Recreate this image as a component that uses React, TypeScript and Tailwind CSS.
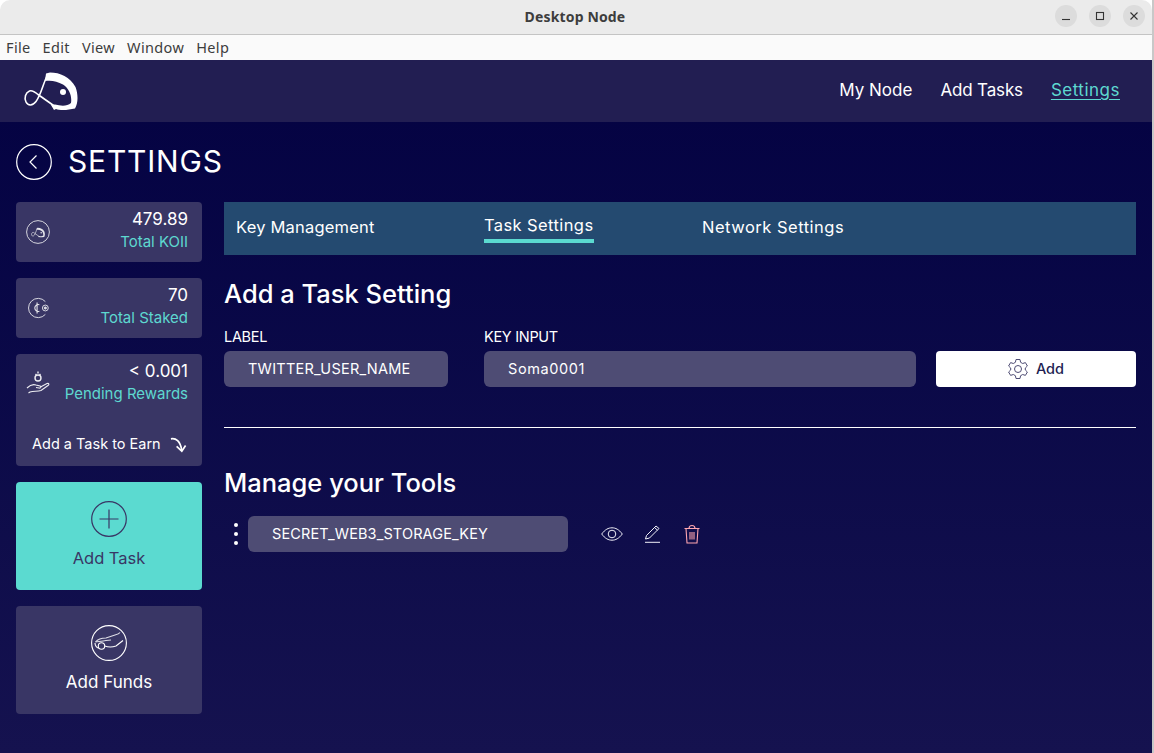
import React from "react";

const F = { fontFamily: '"Inter", "Noto Sans", sans-serif' };

function FishMark({ className = "", stroke = 1.6, bg = "white" }: { className?: string; stroke?: number; bg?: string }) {
  return (
    <svg viewBox="23 71 55 40" className={className} fill="none">
      <path d="M45 81 L46 73.500 L50 72.500 C60 72.500 70 77 75.500 87 C78.500 95 78 104 75 108.500 L66 110 C62 110.300 58 110 56 109 L54 110 L51 105 L55 104.500 C61 106 67 106.500 71 103 C72 97 70 89 63 84.500 C57 81 51 80 45 81 Z" fill={bg} />
      <path d="M47 76 C43 84 41 95 36 101.500 C32.500 106 28 106 26 102 C24 98 25.500 92.500 29.500 91 C32.500 90 35 92 38 94.500 L55 106.500" stroke={bg} strokeWidth={stroke} strokeLinecap="round" />
      <circle cx="63" cy="92" r="3" fill={bg} />
    </svg>
  );
}

function KoiiCircle() {
  return (
    <div className="relative w-6 h-6 flex items-center justify-center">
      <svg viewBox="0 0 24 24" className="absolute inset-0 w-6 h-6" fill="none" stroke="#e5e5ea" strokeWidth="0.9">
        <circle cx="12" cy="12" r="11.400" />
      </svg>
      <FishMark className="relative w-[14px] h-[11px]" stroke={2.6} bg="#e5e5ea" />
    </div>
  );
}

function StakeCircle() {
  return (
    <svg viewBox="0 0 24 24" className="w-6 h-[22px]" fill="none" stroke="#e5e5ea" strokeWidth="1">
      <path d="M20 5 A10.500 10.500 0 1 0 20 19" />
      <circle cx="20" cy="12" r="3.200" />
      <circle cx="20" cy="12" r="1.200" fill="#e5e5ea" />
      <path d="M13.500 8.500 C11 7.500 8.500 9.500 8.500 12 C8.500 14.500 11 16.500 13.500 15.500 M11 6 V18" strokeWidth="1.200" />
    </svg>
  );
}

function HandCoin() {
  return (
    <svg viewBox="0 0 24 26" className="w-6 h-[26px]" fill="none" stroke="#eeeef2" strokeWidth="1.100">
      <circle cx="12" cy="9" r="3" strokeWidth="1.400" />
      <path d="M9.500 5 L10.500 6 M12 2.500 V4.500 M14.500 5 L13.500 6" strokeWidth="1.400" />
      <path d="M1 19 C4 16 7 15 10 16 L14 17 C15.500 17.500 15 19.500 13 19 L10 18.500 M14.500 18 L21 14.500 C23 14 23.500 15.500 22 16.500 L15 21.500 C11 23 8 21.500 4 23 L2.500 24" />
    </svg>
  );
}

function CurveArrow() {
  return (
    <svg viewBox="0 0 18 18" className="w-[17px] h-[17px]" fill="none" stroke="white" strokeWidth="1.800">
      <path d="M1 3 C6 2 11 5 12.500 15.500" />
      <path d="M7 11 L12.500 16 L16.500 10" />
    </svg>
  );
}

function HandFunds() {
  return (
    <svg viewBox="0 0 36 36" className="w-9 h-9" fill="none" stroke="white" strokeWidth="1.100">
      <circle cx="18" cy="18" r="17.400" />
      <path d="M4.500 17 C7 14 11 13 15 13 L24 10 C26 9.500 28 9 29 7.500" stroke="#e0e0e8" />
      <path d="M4 18 C4 21 6 23 8 23" />
      <path d="M4.500 17 C8 16.500 12 16 15 15.500 L20 15" stroke="#e0e0e8" />
      <circle cx="10.500" cy="21" r="3.200" />
      <path d="M13.700 21 C18 22.500 22 22 25 21 L32 15.500" />
    </svg>
  );
}

function Stat({ icon, value, label }: { icon: React.ReactNode; value: string; label: string }) {
  return (
    <div className="h-[60px] rounded-[4px] bg-[#393665] pl-[10px] pr-[14px] flex items-center justify-between">
      <div className="flex items-center">{icon}</div>
      <div className="self-start pt-[6px] text-right">
        <div className="text-[17px] leading-[22px] text-white">{value}</div>
        <div className="mt-[1px] text-[15px] leading-[22px] text-[#5ed8d0]">{label}</div>
      </div>
    </div>
  );
}

export default function App() {
  return (
    <div style={F} className="w-[1154px] h-[753px] overflow-hidden flex flex-col bg-white border-r-2 border-[#c8c8c8]">
      <div className="h-[35px] shrink-0 bg-[#ebebeb] border-b border-[#c4c4c4] rounded-t-[10px] relative flex items-center justify-center">
        <span className="pb-[2px] pr-[2px] text-[14px] font-bold tracking-[0.15px] text-[#3d3d3d]" style={{ fontFamily: '"Noto Sans", "Open Sans", sans-serif' }}>Desktop Node</span>
        <div className="absolute right-[7px] top-[5px] flex gap-[12px]">
          <div className="w-[22px] h-[22px] rounded-full bg-[#dcdcdc] flex items-center justify-center">
            <svg viewBox="0 0 12 12" className="w-3 h-3" stroke="#333" fill="none"><path d="M2 9.500 H10" strokeWidth="1.100" /></svg>
          </div>
          <div className="w-[22px] h-[22px] rounded-full bg-[#dcdcdc] flex items-center justify-center">
            <svg viewBox="0 0 12 12" className="w-3 h-3" stroke="#333" fill="none"><rect x="2.500" y="2.500" width="7" height="7" strokeWidth="1.100" /></svg>
          </div>
          <div className="w-[22px] h-[22px] rounded-full bg-[#dcdcdc] flex items-center justify-center">
            <svg viewBox="0 0 12 12" className="w-3 h-3" stroke="#333" fill="none"><path d="M2.500 2.500 L9.500 9.500 M9.500 2.500 L2.500 9.500" strokeWidth="1.100" /></svg>
          </div>
        </div>
      </div>
      <div className="h-[25px] shrink-0 bg-[#fafafa] flex items-center pl-[6px] gap-[12px] text-[14.500px] tracking-[0.35px] text-[#3d3d3d]" style={{ fontFamily: '"Noto Sans", sans-serif' }}>
        <span>File</span><span>Edit</span><span>View</span><span>Window</span><span>Help</span>
      </div>
      <div className="flex-1 min-h-0 flex flex-col bg-gradient-to-b from-[#040242] to-[#15124f]">
        <header className="h-[62px] shrink-0 bg-[#221e52] flex items-center justify-between pl-[23px] pr-[32px]">
          <FishMark className="w-[55px] h-[40px]" />
          <nav className="pb-[1px] flex items-center gap-[28px] text-[17px] text-white">
            <span>My Node</span>
            <span className="tracking-[-0.15px]">Add Tasks</span>
            <span className="tracking-[0.5px] underline underline-offset-[3px] text-[#5ed8d0]">Settings</span>
          </nav>
        </header>
        <div className="h-[80px] shrink-0 flex items-center pl-[16px] pb-[1px] gap-[16px]">
          <svg viewBox="0 0 36 36" className="w-9 h-9" fill="none" stroke="white">
            <circle cx="18" cy="18" r="17.300" strokeWidth="1.200" />
            <path d="M20.500 11.500 L14 18 L20.500 24.500" strokeWidth="1.200" />
          </svg>
          <h1 className="pb-[2px] text-[30px] leading-none text-white tracking-[0.8px]">SETTINGS</h1>
        </div>
        <div className="flex pl-[16px] pr-[16px] gap-[22px]">
          <aside className="w-[186px] shrink-0 flex flex-col gap-[16px]">
            <Stat icon={<KoiiCircle />} value="479.89" label="Total KOII" />
            <Stat icon={<StakeCircle />} value="70" label="Total Staked" />
            <div className="h-[112px] rounded-[4px] bg-[#393665] pl-[10px] pr-[14px] pt-[6px] flex flex-col">
              <div className="flex justify-between">
                <div className="pt-[9px]"><HandCoin /></div>
                <div className="text-right">
                  <div className="text-[17px] leading-[22px] text-white">&lt; 0.001</div>
                  <div className="text-[15px] leading-[22px] mt-[1px] text-[#5ed8d0] whitespace-nowrap">Pending Rewards</div>
                </div>
              </div>
              <div className="mt-[28px] pl-[6px] flex items-center gap-[9px] text-[14.500px] leading-[22px] text-white whitespace-nowrap">
                Add a Task to Earn <CurveArrow />
              </div>
            </div>
            <div className="h-[108px] rounded-[4px] bg-[#5bdad0] flex flex-col items-center pt-[19px] text-[#393665]">
              <svg viewBox="0 0 36 36" className="w-9 h-9" fill="none" stroke="#393665" strokeWidth="1.200">
                <circle cx="18" cy="18" r="17.300" />
                <path d="M18 8.500 V27.500 M8.500 18 H27.500" />
              </svg>
              <div className="mt-[9px] text-[16.500px] leading-[24px]">Add Task</div>
            </div>
            <div className="h-[108px] rounded-[4px] bg-[#393665] flex flex-col items-center pt-[19px] text-white">
              <HandFunds />
              <div className="mt-[9px] text-[17px] leading-[24px]">Add Funds</div>
            </div>
          </aside>
          <main className="flex-1 min-w-0">
            <div className="h-[53px] bg-[#244a70] flex text-white text-[16.500px]">
              <div className="w-[260px] pl-[12px] pt-[13px] leading-[24px] tracking-[0.2px]">Key Management</div>
              <div className="w-[218px]">
                <div className="inline-block pt-[11px] leading-[24px] tracking-[0.4px] border-b-[4px] border-[#5bdad0] pb-[2px]">Task Settings</div>
              </div>
              <div className="pt-[13px] leading-[24px] tracking-[0.5px]">Network Settings</div>
            </div>
            <h2 className="mt-[24px] text-[25.500px] leading-[30px] font-medium text-white">Add a Task Setting</h2>
            <div className="mt-[18px] flex items-end">
              <div className="w-[224px] mr-[36px]">
                <div className="text-[14.500px] leading-[20px] text-white tracking-[-0.3px]">LABEL</div>
                <div className="mt-[4px] h-[36px] rounded-[6px] bg-[#4e4c74] pl-[24px] flex items-center text-[14.500px] tracking-[0.25px] text-white">TWITTER_USER_NAME</div>
              </div>
              <div className="w-[432px] mr-[20px]">
                <div className="text-[14.500px] leading-[20px] text-white tracking-[-0.3px]">KEY INPUT</div>
                <div className="mt-[4px] h-[36px] rounded-[6px] bg-[#4e4c74] pl-[24px] flex items-center text-[14.500px] tracking-[0.6px] text-white">Soma0001</div>
              </div>
              <div className="w-[200px] h-[36px] rounded-[4px] bg-white flex items-center justify-center gap-[6px] pr-[2px] text-[14.500px] font-medium text-[#221e52]">
                <svg viewBox="0 0 24 24" className="w-[24px] h-[24px]" fill="none" stroke="#4e4c74" strokeWidth="1">
                  <circle cx="12" cy="12" r="3.500" />
                  <path d="M10 2.500 H14 L14.600 5.300 L16.700 6.500 L19.400 5.600 L21.400 9 L19.300 11 V13 L21.400 15 L19.400 18.400 L16.700 17.500 L14.600 18.700 L14 21.500 H10 L9.400 18.700 L7.300 17.500 L4.600 18.400 L2.600 15 L4.700 13 V11 L2.600 9 L4.600 5.600 L7.300 6.500 L9.400 5.300 Z" strokeLinejoin="round" />
                </svg>
                Add
              </div>
            </div>
            <div className="mt-[40px] h-px bg-white" />
            <h2 className="mt-[40px] text-[25.500px] leading-[30px] font-medium text-white">Manage your Tools</h2>
            <div className="mt-[18px] flex items-center">
              <div className="w-[24px] flex flex-col items-center gap-[5px]">
                <span className="w-[4px] h-[4px] rounded-full bg-white" />
                <span className="w-[4px] h-[4px] rounded-full bg-white" />
                <span className="w-[4px] h-[4px] rounded-full bg-white" />
              </div>
              <div className="w-[320px] h-[36px] rounded-[6px] bg-[#4e4c74] pl-[24px] flex items-center text-[14.500px] tracking-[0.13px] text-white">SECRET_WEB3_STORAGE_KEY</div>
              <div className="ml-[33px] flex items-center">
                <svg viewBox="0 0 22 14" className="w-[22px] h-[14px]" fill="none" stroke="#f0f0f8" strokeWidth="1">
                  <path d="M0.700 7 C4 2.500 7.500 0.800 11 0.800 C14.500 0.800 18 2.500 21.300 7 C18 11.500 14.500 13.200 11 13.200 C7.500 13.200 4 11.500 0.700 7 Z" />
                  <circle cx="11" cy="7" r="3.800" />
                </svg>
                <svg viewBox="0 0 16 18" className="ml-[21px] w-[17px] h-[18px]" fill="none" stroke="#f0f0f8" strokeWidth="1">
                  <path d="M1 14 L2 10.500 L11.500 1 L14.500 3.500 L5 13 Z M10 2.500 L13 5.200" />
                  <path d="M0.500 17.300 H15.500" />
                </svg>
                <svg viewBox="0 0 16 20" className="ml-[23px] w-[16px] h-[20px]" fill="none" stroke="#ffa6b0" strokeWidth="1.100">
                  <path d="M0.500 4.500 H15.500 M2 4.500 L3 19 H13 L14 4.500 M5 4.500 C5 0.500 11 0.500 11 4.500" />
                  <path d="M6 8 V15.500 M8 8 V15.500 M10 8 V15.500" />
                </svg>
              </div>
            </div>
          </main>
        </div>
      </div>
    </div>
  );
}
